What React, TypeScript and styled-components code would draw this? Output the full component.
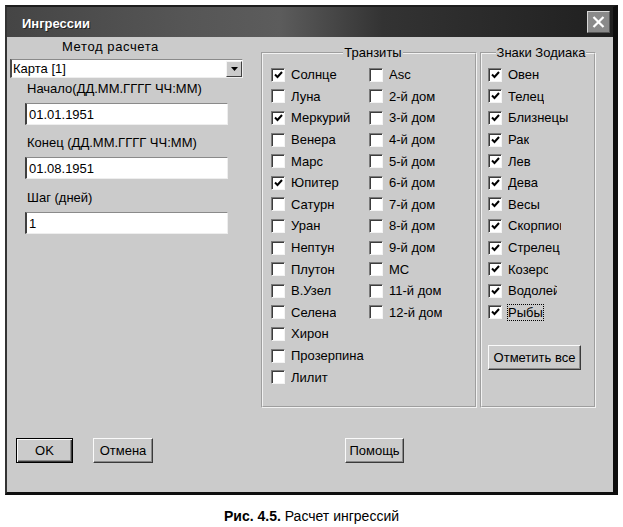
import React from 'react';
import styled, { createGlobalStyle } from 'styled-components';

const GlobalStyle = createGlobalStyle`
  body {
    margin: 0;
    background: #ffffff;
  }
`;

const Page = styled.div`
  width: 623px;
  padding: 5px 0 0 5px;
  box-sizing: border-box;
  font-family: "Liberation Sans", Arial, sans-serif;
  color: #000;
`;

const Window = styled.div`
  width: 613px;
  height: 490px;
  box-sizing: border-box;
  display: flex;
  flex-direction: column;
  background: #cbcbcb;
  border-top: 2px solid #1e1e1e;
  border-left: 2px solid #333;
  border-right: 5px solid #0e0e0e;
  border-bottom: 3px solid #0e0e0e;
`;

const TitleBar = styled.div`
  height: 30px;
  flex: none;
  display: flex;
  align-items: center;
  justify-content: space-between;
  padding: 0 3px 0 15px;
  background: linear-gradient(90deg, #454545 0%, #565656 30%, #5c5c5c 45%, #333 62%, #202020 100%);
`;

const Title = styled.span`
  color: #fff;
  font-weight: bold;
  font-size: 13px;
  margin-top: 2px;
  text-shadow: 1px 1px 0 #222;
`;

const CloseButton = styled.div`
  width: 23px;
  height: 22px;
  box-sizing: border-box;
  background: #8a8a8a;
  border: 1px solid #d8d8d8;
  border-right-color: #555;
  border-bottom-color: #555;
  display: flex;
  align-items: center;
  justify-content: center;
`;

const Body = styled.div`
  flex: 1;
  display: flex;
  flex-direction: column;
  padding-left: 3px;
`;

const MainRow = styled.div`
  display: flex;
  align-items: flex-start;
`;

const LeftColumn = styled.div`
  width: 233px;
  display: flex;
  flex-direction: column;
`;

const MethodLabel = styled.div`
  font-size: 13px;
  line-height: 16px;
  margin-top: 2px;
  padding-left: 52px;
  letter-spacing: 0.6px;
`;

const Combo = styled.div`
  height: 19px;
  margin-top: 4px;
  box-sizing: border-box;
  background: #fff;
  border-left: 2px solid #4a4a4a;
  border-top: 1px solid #8a8a8a;
  border-right: 1px solid #eee;
  border-bottom: 1px solid #eee;
  display: flex;
  align-items: center;
  justify-content: space-between;
  font-size: 13px;
  padding-left: 1px;
`;

const DropButton = styled.div`
  width: 16px;
  height: 16px;
  box-sizing: border-box;
  background: #cbcbcb;
  border: 1px solid;
  border-color: #f4f4f4 #404040 #404040 #f4f4f4;
  display: flex;
  align-items: center;
  justify-content: center;
`;

const FieldLabel = styled.div<{ $gap: number }>`
  font-size: 13px;
  line-height: 16px;
  margin-top: ${p => p.$gap}px;
  padding-left: 17px;
`;

const TextInput = styled.input`
  width: 203px;
  height: 22px;
  margin: 6px 0 0 15px;
  box-sizing: border-box;
  background: #fff;
  border: none;
  border-left: 2px solid #404040;
  border-top: 1px solid #8a8a8a;
  border-right: 1px solid #eee;
  border-bottom: 1px solid #eee;
  padding: 0 0 0 2px;
  font-family: "Liberation Sans", Arial, sans-serif;
  font-size: 13px;
  color: #000;
  outline: none;
`;

const Group = styled.fieldset<{ $width: number; $left: number; $pad: number }>`
  width: ${p => p.$width}px;
  height: 363px;
  box-sizing: border-box;
  margin: 8px 0 0 ${p => p.$left}px;
  padding: 4px 0 0 ${p => p.$pad}px;
  border: 2px groove #f2f2f2;
  min-width: 0;
`;

const Legend = styled.legend`
  margin: 0 auto;
  padding: 0 1px;
  font-size: 13px;
  line-height: 15px;
`;

const Columns = styled.div`
  display: flex;
`;

const Column = styled.div<{ $width?: number }>`
  display: flex;
  flex-direction: column;
  width: ${p => (p.$width ? `${p.$width}px` : 'auto')};
`;

const CheckRow = styled.div`
  height: 21.6px;
  display: flex;
  align-items: center;
  gap: 6px;
  font-size: 13px;
  white-space: nowrap;
`;

const Box = styled.span`
  width: 14px;
  height: 14px;
  flex: none;
  box-sizing: border-box;
  background: #fff;
  border-top: 1px solid #7a7a7a;
  border-left: 1px solid #7a7a7a;
  border-right: 1px solid #f4f4f4;
  border-bottom: 1px solid #f4f4f4;
  box-shadow: inset 1px 1px 0 #3c3c3c;
  display: flex;
  align-items: center;
  justify-content: center;
`;

const CheckText = styled.span<{ $clip?: number; $focus?: boolean }>`
  display: inline-block;
  overflow: hidden;
  ${p => (p.$clip ? `width: ${p.$clip}px;` : '')}
  ${p => (p.$focus ? 'outline: 1px dotted #000; outline-offset: 0;' : '')}
`;

const Button = styled.button<{ $width: number; $default?: boolean }>`
  width: ${p => p.$width}px;
  height: 25px;
  box-sizing: border-box;
  padding: 0;
  background: #cbcbcb;
  font-family: "Liberation Sans", Arial, sans-serif;
  font-size: 13px;
  color: #000;
  border: 1px solid;
  border-color: ${p => (p.$default ? '#000' : '#fafafa #3a3a3a #3a3a3a #fafafa')};
  box-shadow: ${p =>
    p.$default
      ? 'inset 1px 1px 0 #fafafa, inset -1px -1px 0 #3a3a3a, inset -2px -2px 0 #8a8a8a'
      : 'inset -1px -1px 0 #8a8a8a'};
`;

const MarkAllButton = styled(Button)`
  margin-top: 22px;
`;

const ButtonRow = styled.div`
  display: flex;
  margin-top: 30px;
  padding-left: 6px;
`;

const Spacer = styled.div<{ $w: number }>`
  width: ${p => p.$w}px;
  flex: none;
`;

const Caption = styled.div`
  text-align: center;
  font-size: 14px;
  margin-top: 13px;
  padding-right: 5px;
`;

function CheckMark() {
  return (
    <svg width="9" height="8" viewBox="0 0 9 8">
      <path d="M1 3.5 L3.5 6 L8 1" stroke="#000" strokeWidth="2" fill="none" />
    </svg>
  );
}

interface CheckProps {
  label: string;
  checked?: boolean;
  clip?: number;
  focus?: boolean;
}

function Check({ label, checked, clip, focus }: CheckProps) {
  return (
    <CheckRow>
      <Box>{checked && <CheckMark />}</Box>
      <CheckText $clip={clip} $focus={focus}>{label}</CheckText>
    </CheckRow>
  );
}

const planets: [string, boolean][] = [
  ['Солнце', true],
  ['Луна', false],
  ['Меркурий', true],
  ['Венера', false],
  ['Марс', false],
  ['Юпитер', true],
  ['Сатурн', false],
  ['Уран', false],
  ['Нептун', false],
  ['Плутон', false],
  ['В.Узел', false],
  ['Селена', false],
  ['Хирон', false],
  ['Прозерпина', false],
  ['Лилит', false],
];

const houses = ['Asc', '2-й дом', '3-й дом', '4-й дом', '5-й дом', '6-й дом', '7-й дом', '8-й дом', '9-й дом', 'MC', '11-й дом', '12-й дом'];

// the last signs are cut by their control width in the original dialog
const signs: { name: string; clip?: number; focus?: boolean }[] = [
  { name: 'Овен' },
  { name: 'Телец' },
  { name: 'Близнецы' },
  { name: 'Рак' },
  { name: 'Лев' },
  { name: 'Дева' },
  { name: 'Весы' },
  { name: 'Скорпион', clip: 53 },
  { name: 'Стрелец' },
  { name: 'Козерог', clip: 40 },
  { name: 'Водолей', clip: 49 },
  { name: 'Рыбы', focus: true },
];

export default function App() {
  return (
    <Page>
      <GlobalStyle />
      <Window>
        <TitleBar>
          <Title>Ингрессии</Title>
          <CloseButton>
            <svg width="13" height="12" viewBox="0 0 13 12">
              <path d="M1.5 1 L11.5 11 M11.5 1 L1.5 11" stroke="#fff" strokeWidth="2.2" />
            </svg>
          </CloseButton>
        </TitleBar>
        <Body>
          <MainRow>
            <LeftColumn>
              <MethodLabel>Метод расчета</MethodLabel>
              <Combo>
                <span>Карта [1]</span>
                <DropButton>
                  <svg width="7" height="4" viewBox="0 0 7 4">
                    <path d="M0 0 H7 L3.5 4 Z" fill="#000" />
                  </svg>
                </DropButton>
              </Combo>
              <FieldLabel $gap={3}>Начало(ДД.ММ.ГГГГ ЧЧ:ММ)</FieldLabel>
              <TextInput defaultValue="01.01.1951" readOnly />
              <FieldLabel $gap={10}>Конец (ДД.ММ.ГГГГ ЧЧ:ММ)</FieldLabel>
              <TextInput defaultValue="01.08.1951" readOnly />
              <FieldLabel $gap={11}>Шаг (дней)</FieldLabel>
              <TextInput defaultValue="1" readOnly />
            </LeftColumn>

            <Group $width={216} $left={18} $pad={8}>
              <Legend>Транзиты</Legend>
              <Columns>
                <Column $width={98}>
                  {planets.map(([name, checked]) => (
                    <Check key={name} label={name} checked={checked} />
                  ))}
                </Column>
                <Column>
                  {houses.map(name => (
                    <Check key={name} label={name} />
                  ))}
                </Column>
              </Columns>
            </Group>

            <Group $width={116} $left={3} $pad={6}>
              <Legend>Знаки Зодиака</Legend>
              <Column>
                {signs.map(s => (
                  <Check key={s.name} label={s.name} checked clip={s.clip} focus={s.focus} />
                ))}
              </Column>
              <MarkAllButton $width={93}>Отметить все</MarkAllButton>
            </Group>
          </MainRow>

          <ButtonRow>
            <Button $width={57} $default>OK</Button>
            <Spacer $w={20} />
            <Button $width={60}>Отмена</Button>
            <Spacer $w={192} />
            <Button $width={59}>Помощь</Button>
          </ButtonRow>
        </Body>
      </Window>
      <Caption>
        <b>Рис. 4.5.</b> Расчет ингрессий
      </Caption>
    </Page>
  );
}
